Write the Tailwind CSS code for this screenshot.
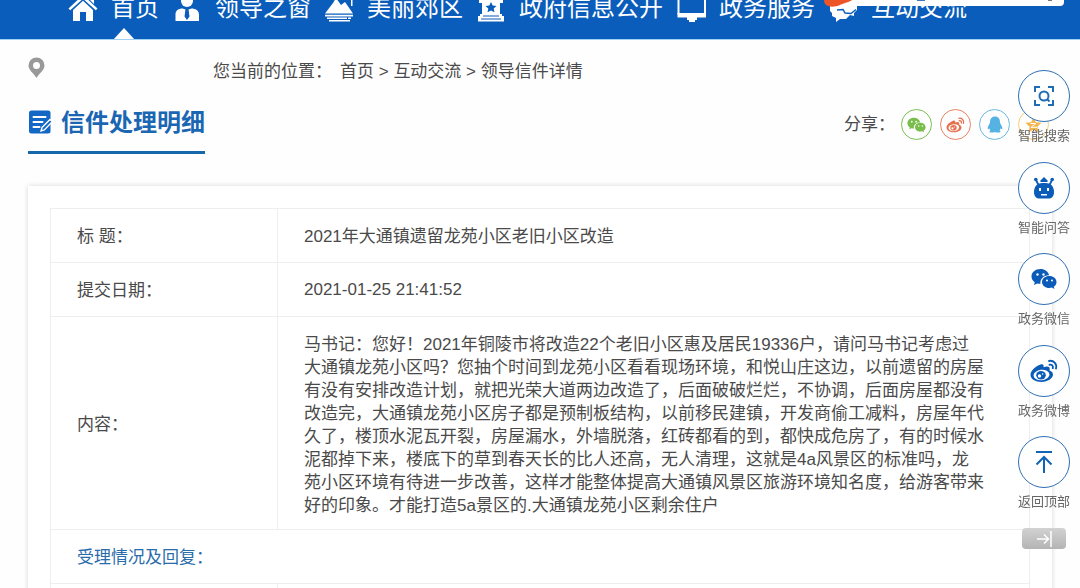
<!DOCTYPE html>
<html lang="zh-CN">
<head>
<meta charset="utf-8">
<meta name="viewport" content="width=device-width, initial-scale=1">
<title>信件处理明细</title>
<script src="https://cdn.jsdelivr.net/npm/@tailwindcss/browser@4"></script>
</head>
<body class="relative min-h-screen overflow-x-hidden bg-[#fefefe] font-['Liberation_Sans','Noto_Sans_CJK_SC',sans-serif] text-[17px] text-[#4a4a4a]">

<!-- shared symbols -->
<svg class="hidden" aria-hidden="true">
  <symbol id="wechat" viewBox="0 0 26 22">
    <path fill="currentColor" d="M9.500 1C4.300 1 .500 4.400.500 8.500c0 2.400 1.200 4.400 3.200 5.700L3 17l3.200-1.600c1 .3 2.100.500 3.300.400-.9-4.500 3-8.700 8.600-8.600C17.200 3.500 13.700 1 9.500 1Z"/>
    <path fill="currentColor" d="M25.500 14c0-3.400-3.200-6-7.200-6s-7.300 2.600-7.300 6 3.200 6 7.300 6c.9 0 1.700-.1 2.500-.4l2.700 1.500-.7-2.400c1.700-1.100 2.700-2.800 2.700-4.700Z"/>
    <g fill="#fff"><circle cx="6.500" cy="6.500" r="1.200"/><circle cx="12.500" cy="6.500" r="1.200"/><circle cx="16" cy="12.500" r="1"/><circle cx="21" cy="12.500" r="1"/></g>
  </symbol>
  <symbol id="weibo" viewBox="0 0 28 24">
    <path fill="currentColor" d="M10.500 5.500c2.300-1 3.700.3 3 2.800 3.200-1.300 6.300-1.100 6.200 1.700 0 .8-.3 1.300-.2 1.600 2.200.7 3.500 2.100 3.500 4 0 4-5.300 7.400-11.400 7.400C5.300 23 .5 20 .5 15.800c0-3.800 5-8.800 10-10.300Z"/>
    <ellipse cx="11.500" cy="16" rx="8" ry="5.200" fill="#fff" transform="rotate(-6 11.500 16)"/>
    <ellipse cx="11" cy="16.200" rx="4.800" ry="4.200" fill="currentColor"/>
    <circle cx="9.500" cy="17" r="1.700" fill="#fff"/><circle cx="12.600" cy="15" r=".8" fill="#fff"/>
    <path fill="none" stroke="currentColor" stroke-width="1.900" stroke-linecap="round" d="M19 2c4.500-1 8.200 3 7 7.500M19.500 5.700c2.200-.5 3.900 1.300 3.300 3.500"/>
  </symbol>
</svg>

<header class="h-10 overflow-hidden border-b border-[#9fd0f5] bg-[#0a5dbb]">
  <nav class="-mt-[10px] flex h-9 items-center gap-[13px] pl-[68px] text-2xl whitespace-nowrap text-white" aria-label="主导航">
    <a href="#" class="relative flex items-center gap-[13px]">
      <svg class="h-[30px] w-[30px]" viewBox="0 0 30 30" fill="#fff" aria-hidden="true"><path d="M15 2 29.500 15.500 27.800 17.300 15 5.800 2.200 17.300.5 15.500Z"/><path d="M22 4h4v7l-4-4Z"/><path d="M5 17 15 7.700 25 17v11h-7V19h-6v9H5Z"/></svg>
      首页
      <svg class="absolute right-6 top-9 h-3 w-[22px]" viewBox="0 0 22 12" aria-hidden="true"><path fill="#fff" d="M11 0 22 12H0Z"/></svg>
    </a>
    <a href="#" class="flex items-center gap-[13px]">
      <svg class="h-[30px] w-[30px]" viewBox="0 0 30 30" fill="#fff" aria-hidden="true"><circle cx="15" cy="8" r="6"/><path d="M3.500 28V21.500c0-4 3-6 7-6l3 1-1 7 2.500 3.500 2.500-3.500-1-7 3-1c4 0 7.500 2 7.500 6V28Z"/><path d="M14 17h2l1 6-2 3-2-3Z" fill="#0a5dbb"/></svg>
      领导之窗
    </a>
    <a href="#" class="flex items-center gap-[13px]">
      <svg class="h-[30px] w-[30px]" viewBox="0 0 30 30" aria-hidden="true"><g fill="#fff"><path d="M1 20.500 9 10l3-5 5 7 4-3 8 11.500Z"/><path d="M27 4h1.500v9H27zM1 21.800h28v1.700H1zM3 24.500h20V26H3zM24 24.500h3V26h-3zM5 27h21v1.500H5z"/></g></svg>
      美丽郊区
    </a>
    <a href="#" class="flex items-center gap-[13px]">
      <svg class="h-[30px] w-[30px]" viewBox="0 0 30 30" aria-hidden="true"><path fill="#fff" d="M3 3h24v7h-3v11h2v2h2v5.500H2V23h2v-2h2V10H3Z"/><path fill="#0a5dbb" d="m15 9 1.700 3.500 3.800.4-2.800 2.600.8 3.800L15 17.500l-3.500 1.800.8-3.800-2.800-2.600 3.800-.4ZM7 22.500h16v1H7zM5 25.500h20v1H5z"/></svg>
      政府信息公开
    </a>
    <a href="#" class="flex items-center gap-[13px]">
      <svg class="h-[30px] w-[30px]" viewBox="0 0 30 30" aria-hidden="true"><rect x="2.500" y="4" width="26.500" height="18" rx="1.500" fill="none" stroke="#fff" stroke-width="2"/><path fill="#fff" d="M1.500 20H30v4.500h-9V27h-2v2h-6v-2h-2v-2.500H1.500Z"/></svg>
      政务服务
    </a>
    <a href="#" class="flex items-center gap-[13px]">
      <svg class="h-[30px] w-[30px]" viewBox="0 0 30 30" aria-hidden="true"><path fill="#fff" d="M6 7h23v10l-3 3v3l-4-1-4 4h-6l-4 3v-4l-4-2v-3l-2-2V13Z"/><path fill="none" stroke="#0a5dbb" stroke-width="1.500" d="m9 17 6-.5 2 3.500 6 .5 5-4"/></svg>
      互动交流
    </a>
  </nav>
</header>

<!-- input-method bar hanging over the navigation -->
<div class="absolute top-0 right-4 h-[6px] w-[222px] rounded-b-sm bg-white" aria-hidden="true">
  <svg class="absolute -left-[18px] top-0 h-[7px] w-7" viewBox="0 0 28 7"><path fill="#ee5526" d="M0 0h28c-2 2-8 3-12 5C10 7.500 0 8 0 0Z"/></svg>
  <i class="absolute left-[75px] top-0 h-px w-2 bg-[#3c78c0]"></i>
  <i class="absolute right-3 top-0 h-px w-1 bg-[#777]"></i>
</div>

<main class="px-7">
  <div class="flex h-[62px] items-center">
    <svg class="-mt-1.5 h-[22px] w-[17px]" viewBox="0 0 17 22" aria-hidden="true"><path fill="#999" fill-rule="evenodd" d="M8.500.5a8 8 0 0 1 8 8c0 4.500-4.500 7-8 12.500C5 15.500.5 13 .5 8.500a8 8 0 0 1 8-8Zm0 4.500a3.500 3.500 0 1 0 0 7 3.500 3.500 0 0 0 0-7Z"/></svg>
    <div class="ml-[168px] flex gap-2 pt-0.5 whitespace-nowrap">
      <span>您当前的位置：</span>
      <span><a href="#">首页</a> &gt; <a href="#">互动交流</a> &gt; <a href="#">领导信件详情</a></span>
    </div>
  </div>

  <div class="flex items-start justify-between">
    <h1 class="-mt-px flex h-[53px] items-start gap-2 border-b-[3px] border-[#1768aa] text-2xl leading-[44px] font-bold text-[#1b66b3]">
      <svg class="mt-[9px] h-6 w-[25px]" viewBox="0 0 25 24" aria-hidden="true"><rect x="1" y=".5" width="21.500" height="23" rx="2.500" fill="#1268c4"/><path stroke="#fff" stroke-width="2" stroke-linecap="round" d="M5.500 7h12M5.500 12h9M5.500 17h6"/><path fill="#1268c4" stroke="#fff" stroke-width="1.400" d="m14 17.500 8-8 2.300 2.200-8 8.300-3.300 1Z"/></svg>
      信件处理明细
    </h1>
    <div class="mt-[7px] flex items-center gap-2 pr-[3px]">
      <span class="mr-[-2px]">分享：</span>
      <button aria-label="分享到微信" class="flex h-[31px] w-[31px] items-center justify-center rounded-full border border-[#7cc152] text-[#79bd4c]"><svg class="h-4 w-[19px]"><use href="#wechat"/></svg></button>
      <button aria-label="分享到微博" class="flex h-[31px] w-[31px] items-center justify-center rounded-full border border-[#e88365] text-[#e5724f]"><svg class="h-4 w-[19px]"><use href="#weibo"/></svg></button>
      <button aria-label="分享到QQ" class="flex h-[31px] w-[31px] items-center justify-center rounded-full border border-[#6ab9e3] text-[#56b2e2]"><svg class="h-[17px] w-4" viewBox="0 0 16 17"><path fill="currentColor" d="M8 .5c3.500 0 5 2.500 5 5.500 0 1 .3 1.300.8 2.300.8 1.500 1.700 3 1.500 4.500-.2.800-1 .3-1.600-.5-.2.900-.6 1.500-1.200 2.100.9.400 1.200.9.900 1.500-.4.800-3.900.8-5.400.1-1.500.7-5 .7-5.400-.1-.3-.6 0-1.100.9-1.500-.6-.6-1-1.200-1.200-2.100-.6.800-1.400 1.300-1.600.5-.2-1.500.7-3 1.500-4.500C2.700 7.300 3 7 3 6 3 3 4.500.5 8 .5Z"/></svg></button>
      <button aria-label="分享到QQ空间" class="flex h-[31px] w-[31px] items-center justify-center rounded-full border border-[#f5cf78] text-[#f5b54a]"><svg class="h-4 w-[17px]" viewBox="0 0 17 16"><path fill="currentColor" d="m8.500 0 2.300 5.200 5.700.6-4.200 3.900 1.200 5.800-5-2.900-5 2.900 1.200-5.800L.5 5.800l5.700-.6Z"/><path stroke="#fff" fill="none" d="M5.500 6.500h5.500l-5 3.800h6"/></svg></button>
    </div>
  </div>

  <section class="mt-8 min-h-[402px] bg-white p-[22px] shadow-[0_0_5px_rgba(0,0,0,0.16)]">
    <table class="w-full border-collapse text-left">
      <colgroup><col class="w-[227px]"><col></colgroup>
      <tbody>
        <tr class="h-[54px]"><th scope="row" class="border border-[#eee] px-[26px] pt-[3px] font-normal">标 题：</th><td class="border border-[#eee] px-[26px] pt-[3px]">2021年大通镇遗留龙苑小区老旧小区改造</td></tr>
        <tr class="h-[54px]"><th scope="row" class="border border-[#eee] px-[26px] pt-[3px] font-normal">提交日期：</th><td class="border border-[#eee] px-[26px]">2021-01-25 21:41:52</td></tr>
        <tr class="h-[213px]"><th scope="row" class="border border-[#eee] px-[26px] pt-[3px] font-normal">内容：</th><td class="border border-[#eee] pt-[3px] pl-[26px] leading-[23px] whitespace-nowrap">马书记：您好！2021年铜陵市将改造22个老旧小区惠及居民19336户，请问马书记考虑过<br>大通镇龙苑小区吗？您抽个时间到龙苑小区看看现场环境，和悦山庄这边，以前遗留的房屋<br>有没有安排改造计划，就把光荣大道两边改造了，后面破破烂烂，不协调，后面房屋都没有<br>改造完，大通镇龙苑小区房子都是预制板结构，以前移民建镇，开发商偷工减料，房屋年代<br>久了，楼顶水泥瓦开裂，房屋漏水，外墙脱落，红砖都看的到，都快成危房了，有的时候水<br>泥都掉下来，楼底下的草到春天长的比人还高，无人清理，这就是4a风景区的标准吗，龙<br>苑小区环境有待进一步改善，这样才能整体提高大通镇风景区旅游环境知名度，给游客带来<br>好的印象。才能打造5a景区的.大通镇龙苑小区剩余住户</td></tr>
        <tr class="h-[54px]"><th scope="row" colspan="2" class="border border-[#eee] px-[26px] pt-[3px] font-normal text-[#2a6cab]">受理情况及回复：</th></tr>
        <tr class="h-[54px]"><td class="border border-[#eee]"></td><td class="border border-[#eee]"></td></tr>
      </tbody>
    </table>
  </section>
</main>

<!-- floating tool column -->
<aside class="fixed top-[70px] right-[10px] flex w-[52px] flex-col items-center text-[13px] whitespace-nowrap text-[#666]" aria-label="快捷工具">
  <a href="#" class="flex h-[92px] flex-col items-center leading-7">
    <span class="flex h-[52px] w-[52px] items-center justify-center rounded-full border border-[#2f6fb3] bg-white"><svg class="h-5 w-5" viewBox="0 0 20 20" fill="none" stroke="#1f6db5" stroke-width="2" aria-hidden="true"><path d="M1 6V1h5M14 1h5v5M19 14v5h-5M6 19H1v-5"/><circle cx="10" cy="10" r="4.500"/><path d="m13 13 2.500 2.500"/></svg></span>智能搜索
  </a>
  <a href="#" class="flex h-[91px] flex-col items-center leading-7">
    <span class="flex h-[52px] w-[52px] items-center justify-center rounded-full border border-[#2f6fb3] bg-white"><svg class="h-[22px] w-[22px]" viewBox="0 0 22 22" aria-hidden="true"><path fill="#0b5cb8" d="M5 7c3-1.300 9-1.300 12 0 3 1.500 4 5 4 8 0 4-2 6.500-5 6.500H6c-3 0-5-2.500-5-6.500 0-3 1-6.500 4-8Z"/><path stroke="#0b5cb8" stroke-width="1.800" d="M3 3l3 6M19 3l-3 6"/><circle cx="2.800" cy="2.500" r="1.800" fill="#0b5cb8"/><circle cx="19.200" cy="2.500" r="1.800" fill="#0b5cb8"/><path fill="#0b5cb8" d="m7 4 2-2 2-2 2 2 2 2-1 1H8Z"/><path fill="#fff" d="M6 11h2v3H6zM14 11h2v3h-2zM8 17h6v1.500H8z"/></svg></span>智能问答
  </a>
  <a href="#" class="flex h-[92px] flex-col items-center leading-7">
    <span class="flex h-[52px] w-[52px] items-center justify-center rounded-full border border-[#2f6fb3] bg-white text-[#0b5cb8]"><svg class="h-[22px] w-[26px]" aria-hidden="true"><use href="#wechat"/></svg></span>政务微信
  </a>
  <a href="#" class="flex h-[91px] flex-col items-center leading-7">
    <span class="flex h-[52px] w-[52px] items-center justify-center rounded-full border border-[#2f6fb3] bg-white text-[#0b5cb8]"><svg class="h-6 w-7" aria-hidden="true"><use href="#weibo"/></svg></span>政务微博
  </a>
  <a href="#" class="flex h-[92px] flex-col items-center leading-7">
    <span class="flex h-[52px] w-[52px] items-center justify-center rounded-full border border-[#2f6fb3] bg-white"><svg class="h-[22px] w-[18px]" viewBox="0 0 18 22" fill="none" stroke="#1264b4" stroke-width="2" aria-hidden="true"><path d="M1 1h16M9 22V6M1.500 13.500 9 6l7.500 7.500"/></svg></span>返回顶部
  </a>
  <button aria-label="收起" class="flex h-[21px] w-11 items-center justify-center rounded-sm bg-linear-to-b from-[#d2d2d2] to-[#b4b4b4]"><svg class="h-4 w-4" viewBox="0 0 16 16" fill="none" stroke="#fff" stroke-width="1.500" aria-hidden="true"><path d="M1 8h11M8 3.500 12.500 8 8 12.500M15 0v16"/></svg></button>
</aside>
</body>
</html>
